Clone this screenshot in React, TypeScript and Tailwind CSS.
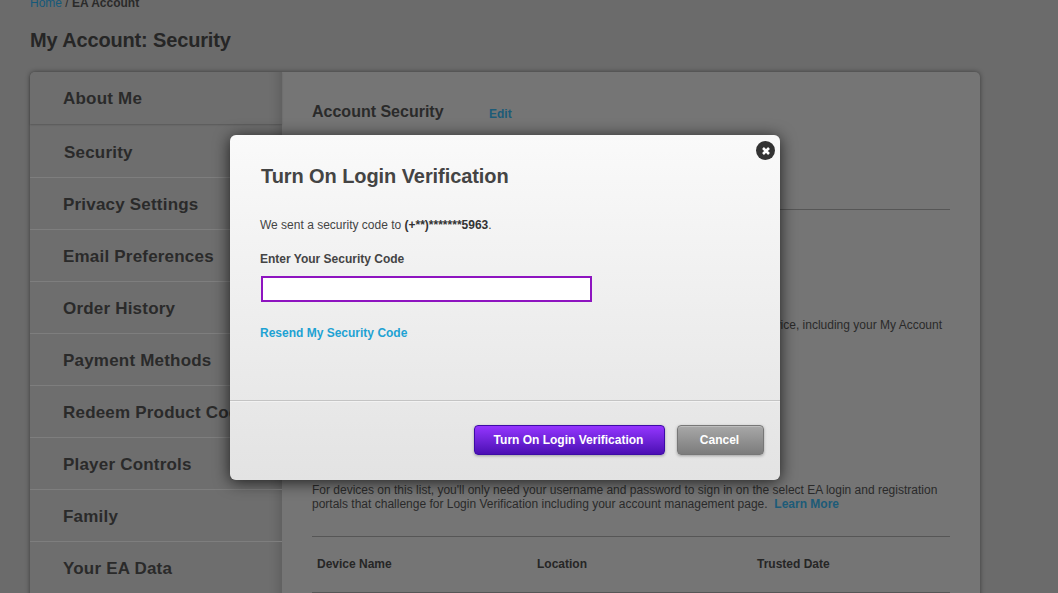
const menu = ["Privacy Settings", "Email Preferences", "Order History", "Payment Methods", "Redeem Product Codes", "Player Controls", "Family", "Your EA Data"];

const SideRow = ({ label }: { label: string }) => (
  <div className="flex h-[52px] items-center border-b border-b-[#7e7e7e] pl-[33px] pt-[2px] text-[17px] font-bold tracking-[0.2px] text-[#2a2a2a] whitespace-nowrap">
    {label}
  </div>
);

export default function App() {
  return (
    <div className="relative h-[593px] w-[1058px] overflow-hidden bg-[#6b6b6b] font-['Liberation_Sans',Arial,sans-serif]">
      <div className="h-[593px] overflow-hidden px-[30px]">
        <div className="-mt-[5px] text-[12px] leading-[16px] text-[#2a2a2a]">
          <span className="text-[#15597a]">Home</span> / <span className="font-bold">EA Account</span>
        </div>
        <h1 className="mt-[17px] text-[20px] font-bold leading-[24px] tracking-[-0.15px] text-[#262626]">My Account: Security</h1>

        <div className="mt-[20px] flex h-[560px] w-[950px] rounded-t-[5px] bg-[#757575] shadow-[0_0_5px_rgba(0,0,0,0.45)]">
          <div className="w-[252px] shrink-0 rounded-tl-[5px] bg-[#6e6e6e] shadow-[inset_-14px_0_12px_-12px_rgba(0,0,0,0.18)]">
            <div className="flex h-[52px] items-center rounded-tl-[5px] pl-[33px] pt-px text-[17px] font-bold tracking-[0.2px] text-[#2a2a2a] shadow-[0_1px_2px_rgba(0,0,0,0.2)]">
              About Me
            </div>
            <div className="flex h-[54px] items-center border-b border-b-[#7e7e7e] pl-[34px] pt-[4px] text-[17px] font-bold tracking-[0.2px] text-[#2a2a2a]">
              Security
            </div>
            {menu.map((m) => (
              <SideRow key={m} label={m} />
            ))}
          </div>

          <div className="flex-1 pl-[30px]">
            <div className="mt-[30px] flex items-baseline">
              <div className="w-[177px] text-[16px] font-bold leading-[20px] text-[#2a2a2a]">Account Security</div>
              <div className="relative top-px text-[12px] font-bold text-[#1c5b78]">Edit</div>
            </div>
            <div className="mt-[87px] h-px w-[638px] bg-[#565656]" />
            <div className="mt-[108px] w-[638px] pr-[8px] text-right text-[12px] leading-[14px] text-[#2a2a2a] whitespace-nowrap">
              on any new device, including your My Account
            </div>
            <div className="mt-[151px] w-[638px] text-[12px] leading-[14px] text-[#2a2a2a] whitespace-nowrap">
              For devices on this list, you'll only need your username and password to sign in on the select EA login and registration
              <br />
              portals that challenge for Login Verification including your account management page.{"\u00a0\u00a0"}
              <span className="font-bold text-[#1c5b78]">Learn More</span>
            </div>
            <div className="mt-[25px] h-px w-[638px] bg-[#565656]" />
            <div className="flex h-[56px] w-[638px] items-center border-b border-b-[#565656] pb-px pl-[5px] text-[12px] font-bold text-[#262626]">
              <div className="w-[220px]">Device Name</div>
              <div className="w-[220px]">Location</div>
              <div>Trusted Date</div>
            </div>
          </div>
        </div>
      </div>

      {/* modal */}
      <div className="absolute left-[230px] top-[135px] flex h-[345px] w-[550px] flex-col rounded-[6px] bg-gradient-to-b from-[#fafafa] to-[#e3e3e3] shadow-[0_2px_16px_rgba(0,0,0,0.75)]">
        <button className="absolute right-[5px] top-[6px] flex h-[19px] w-[19px] items-center justify-center rounded-full bg-[#333333]">
          <svg width="10" height="10" viewBox="0 0 10 10">
            <path d="M2 2 L8 8 M8 2 L2 8" stroke="#ffffff" strokeWidth="2.6" />
          </svg>
        </button>
        <div className="h-[265px] shrink-0 pl-[30px]">
          <h2 className="ml-px mt-[29px] text-[20px] font-bold leading-[24px] tracking-[-0.08px] text-[#444444]">Turn On Login Verification</h2>
          <p className="mt-[29px] text-[12px] leading-[16px] text-[#444444]">
            We sent a security code to <span className="font-bold text-[#333333]">(+**)*******5963</span>.
          </p>
          <div className="mt-[18px] text-[12px] font-bold leading-[16px] text-[#444444]">Enter Your Security Code</div>
          <input className="mt-[9px] ml-px block h-[26px] w-[331px] border-2 border-[#8e14c0] bg-white outline-none" />
          <div className="mt-[23px] text-[12px] font-bold leading-[16px] text-[#1ea2d3]">Resend My Security Code</div>
        </div>
        <div className="h-px bg-[#c4c4c4]" />
        <div className="flex flex-1 justify-end gap-[12px] border-t border-t-[#f2f2f2] pr-[16px] pt-[23px]">
          <button className="h-[30px] w-[191px] rounded-[4px] border border-[#3d0ca6] bg-gradient-to-b from-[#9535ff] to-[#4c0eb4] pr-[2px] text-[12px] font-bold text-white shadow-[0_1px_3px_rgba(0,0,0,0.3)]">
            Turn On Login Verification
          </button>
          <button className="h-[30px] w-[87px] rounded-[4px] border border-[#777777] bg-gradient-to-b from-[#a8a8a8] to-[#7c7c7c] pr-[2px] text-[12px] font-bold text-white shadow-[inset_0_1px_0_#bdbdbd,0_1px_3px_rgba(0,0,0,0.3)]">
            Cancel
          </button>
        </div>
      </div>
    </div>
  );
}
